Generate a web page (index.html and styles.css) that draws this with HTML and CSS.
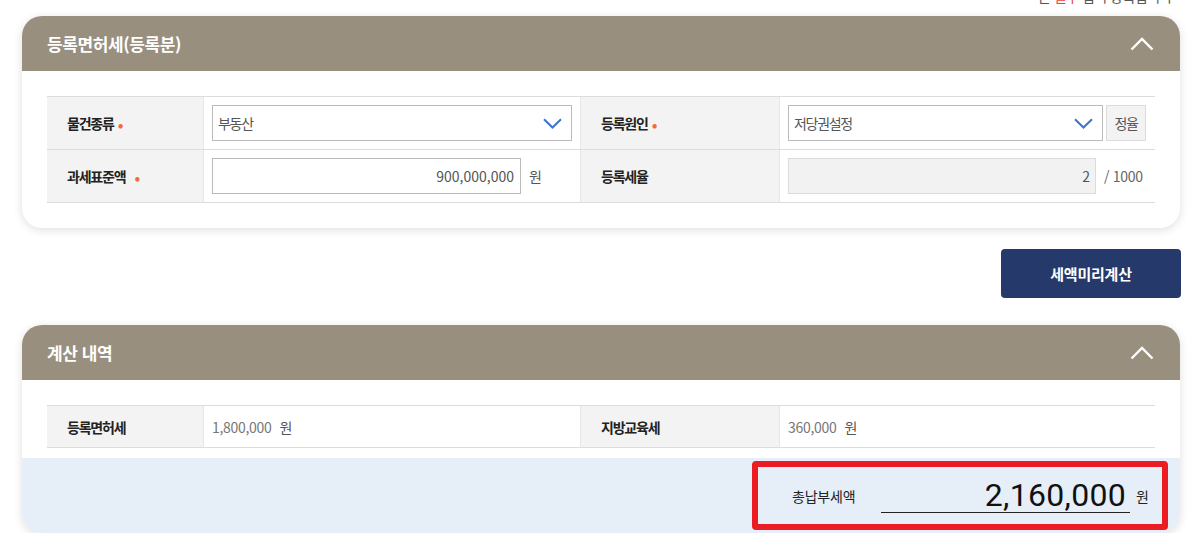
FILE: index.html
```html
<!DOCTYPE html>
<html lang="ko">
<head>
<meta charset="utf-8">
<title>등록면허세(등록분)</title>
<link rel="stylesheet" href="styles.css">
</head>
<body>
<div class="page">
  <div class="topnote"><span class="topnote-text">는 <b class="red">필수</b> 입력 항목입니다</span></div>

  <section class="card">
    <header class="card-head">
      <h2 class="card-title">등록면허세(등록분)</h2>
      <svg class="fold" width="24" height="14" viewBox="0 0 24 14"><path d="M1.5 12.5 L12 2 L22.5 12.5" fill="none" stroke="#fff" stroke-width="2.4"/></svg>
    </header>
    <div class="card-body">
      <div class="grid grid-form">
        <div class="th">물건종류<i class="req">•</i></div>
        <div class="td">
          <div class="select sel-1"><span>부동산</span><svg class="caret" width="19" height="11" viewBox="0 0 19 11"><path d="M1 1.2 L9.5 9.5 L18 1.2" fill="none" stroke="#3f74cf" stroke-width="2.1"/></svg></div>
        </div>
        <div class="th">등록원인<i class="req">•</i></div>
        <div class="td">
          <div class="select sel-2"><span>저당권설정</span><svg class="caret" width="19" height="11" viewBox="0 0 19 11"><path d="M1 1.2 L9.5 9.5 L18 1.2" fill="none" stroke="#3f74cf" stroke-width="2.1"/></svg></div>
          <button class="btn-small">정율</button>
        </div>
        <div class="th">과세표준액<i class="req req-gap">•</i></div>
        <div class="td">
          <div class="input in-1">900,000,000</div><span class="unit">원</span>
        </div>
        <div class="th">등록세율</div>
        <div class="td">
          <div class="input in-2 readonly">2</div><span class="unit num">/ 1000</span>
        </div>
      </div>
    </div>
  </section>

  <div class="actions"><button class="btn-primary">세액미리계산</button></div>

  <section class="card">
    <header class="card-head">
      <h2 class="card-title">계산 내역</h2>
      <svg class="fold" width="24" height="14" viewBox="0 0 24 14"><path d="M1.5 12.5 L12 2 L22.5 12.5" fill="none" stroke="#fff" stroke-width="2.4"/></svg>
    </header>
    <div class="card-body result-body">
      <div class="grid grid-result">
        <div class="th">등록면허세</div>
        <div class="td"><span class="amount">1,800,000</span><span class="won">원</span></div>
        <div class="th">지방교육세</div>
        <div class="td"><span class="amount">360,000</span><span class="won">원</span></div>
      </div>
    </div>
    <div class="total-bar">
      <div class="total-box">
        <span class="total-label">총납부세액</span>
        <div class="total-input">2,160,000</div>
        <span class="total-unit">원</span>
      </div>
    </div>
  </section>
</div>
</body>
</html>
```

FILE: styles.css
```css
* { box-sizing: border-box; }

html, body {
  margin: 0;
  padding: 0;
  background: #ffffff;
}

body {
  font-family: "Noto Sans CJK KR", "Noto Sans", sans-serif;
  color: #222;
  font-size: 14px;
}

.page {
  width: 1191px;
  padding: 0 11px 0 22px;
}

.topnote {
  height: 16px;
  overflow: hidden;
  display: flex;
  justify-content: flex-end;
  padding-right: 8px;
}

.topnote-text {
  display: block;
  margin-top: -13px;
  font-size: 14px;
  line-height: 18px;
  color: #555;
  letter-spacing: -0.5px;
}

.red { color: #f04040; font-weight: 400; }

.card {
  background: #fff;
  border-radius: 20px;
  box-shadow: 0 2px 10px rgba(0, 0, 0, 0.13);
  overflow: hidden;
}

.card-head {
  height: 55px;
  background: #998f7e;
  display: flex;
  align-items: center;
  justify-content: space-between;
  padding: 0 26px 0 25px;
}

.card-title {
  margin: 0;
  color: #fff;
  font-size: 17px;
  font-weight: 700;
  letter-spacing: -0.4px;
  line-height: 1;
}

.fold { display: block; margin-top: 1px; }

.card-body {
  padding: 25px 25px 25px;
}

.grid {
  display: grid;
  grid-template-columns: 157px 377px 199px 375px;
  border-top: 1px solid #dcdcdc;
}

.grid-form { grid-auto-rows: 53px; }
.grid-result { grid-auto-rows: 42px; }

.th, .td {
  border-bottom: 1px solid #dcdcdc;
  display: flex;
  align-items: center;
}

.th {
  background: #f3f3f3;
  padding-left: 20px;
  font-weight: 700;
  font-size: 14px;
  letter-spacing: -1.2px;
  color: #222;
  border-right: 1px solid #e6e6e6;
}

.td {
  padding-left: 8px;
  border-right: 1px solid #e6e6e6;
}

.grid .td:nth-child(4n) { border-right: none; }

.req {
  font-style: normal;
  color: #f26a3a;
  font-weight: 400;
  font-size: 17px;
  line-height: 1;
  margin-left: 4px;
  letter-spacing: 0;
}

.req-gap { margin-left: 9px; }

.select {
  height: 36px;
  border: 1px solid #bbb;
  background: #fff;
  display: flex;
  align-items: center;
  justify-content: space-between;
  padding: 0 9px 0 5px;
  color: #555;
  font-size: 14px;
  letter-spacing: -1.3px;
}

.sel-1 { width: 360px; }
.sel-2 { width: 315px; }

.caret { display: block; margin-top: 1px; }

.btn-small {
  margin-left: 3px;
  width: 40px;
  height: 36px;
  border: 1px solid #dcdcdc;
  background: #f3f3f3;
  color: #555;
  font-family: inherit;
  font-size: 14px;
  letter-spacing: -1.5px;
  padding: 0;
}

.input {
  height: 36px;
  border: 1px solid #bbb;
  background: #fff;
  display: flex;
  align-items: center;
  justify-content: flex-end;
  padding-right: 6px;
  color: #555;
  font-size: 14px;
}

.in-1 { width: 309px; }
.in-2 { width: 308px; padding-right: 5px; }

.readonly {
  background: #f2f2f2;
  border-color: #dcdcdc;
}

.unit {
  margin-left: 8px;
  color: #555;
  font-size: 14px;
}

.unit.num { color: #666; letter-spacing: -0.3px; }

.actions {
  display: flex;
  justify-content: flex-end;
  margin: 21px -1px 27px 0;
}

.btn-primary {
  width: 180px;
  height: 49px;
  border: none;
  border-radius: 4px;
  background: #253a6a;
  color: #fff;
  font-family: inherit;
  font-size: 15px;
  font-weight: 700;
  letter-spacing: -0.2px;
}

.result-body { padding-bottom: 10px; }

.amount {
  color: #777;
  font-size: 14px;
  letter-spacing: -0.3px;
}

.won {
  margin-left: 8px;
  color: #555;
  font-size: 14px;
}

.total-bar {
  background: #e6eff8;
  display: flex;
  justify-content: flex-end;
  padding: 3px 12px 3px 0;
}

.total-box {
  width: 416px;
  height: 69px;
  border: 6px solid #ec1c24;
  border-radius: 4px;
  display: flex;
  align-items: center;
  padding-left: 34px;
}

.total-label {
  font-size: 14px;
  letter-spacing: -0.2px;
  color: #222;
  width: 89px;
}

.total-input {
  width: 249px;
  height: 34px;
  border-bottom: 1px solid #222;
  display: flex;
  align-items: center;
  justify-content: flex-end;
  padding-right: 4px;
  font-family: Roboto, "Noto Sans", sans-serif;
  font-size: 32px;
  color: #111;
  letter-spacing: 0.3px;
  line-height: 1;
}

.total-unit {
  margin-left: 6px;
  font-size: 14px;
  color: #222;
}
```
